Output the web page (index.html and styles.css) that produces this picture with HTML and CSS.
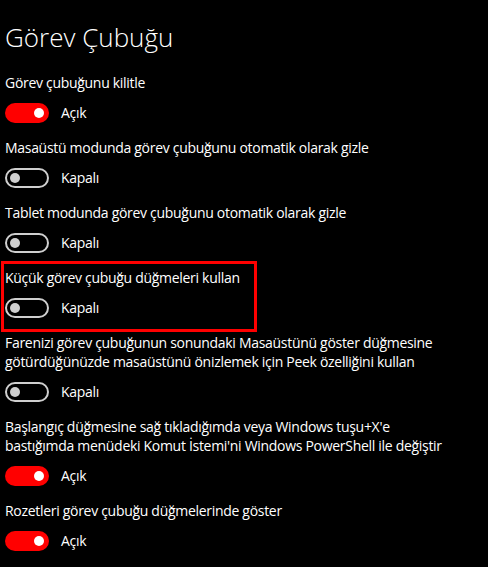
FILE: index.html
```html
<!DOCTYPE html>
<html lang="tr">
<head>
<meta charset="utf-8">
<title>Görev Çubuğu</title>
<link rel="stylesheet" href="styles.css">
</head>
<body>
<main class="page">
  <h1 class="title">Görev Çubuğu</h1>
  <div class="settings">
    <section class="group">
      <p class="label">Görev çubuğunu kilitle</p>
      <div class="toggle-row"><span class="toggle on"><span class="knob"></span></span><span class="state">Açık</span></div>
    </section>
    <section class="group">
      <p class="label">Masaüstü modunda görev çubuğunu otomatik olarak gizle</p>
      <div class="toggle-row"><span class="toggle off"><span class="knob"></span></span><span class="state">Kapalı</span></div>
    </section>
    <section class="group">
      <p class="label">Tablet modunda görev çubuğunu otomatik olarak gizle</p>
      <div class="toggle-row"><span class="toggle off"><span class="knob"></span></span><span class="state">Kapalı</span></div>
    </section>
    <section class="group marked">
      <p class="label">Küçük görev çubuğu düğmeleri kullan</p>
      <div class="toggle-row"><span class="toggle off"><span class="knob"></span></span><span class="state">Kapalı</span></div>
    </section>
    <section class="group">
      <p class="label">Farenizi görev çubuğunun sonundaki Masaüstünü göster düğmesine<br>götürdüğünüzde masaüstünü önizlemek için Peek özelliğini kullan</p>
      <div class="toggle-row"><span class="toggle off"><span class="knob"></span></span><span class="state">Kapalı</span></div>
    </section>
    <section class="group">
      <p class="label">Başlangıç düğmesine sağ tıkladığımda veya Windows tuşu+X'e<br>bastığımda menüdeki Komut İstemi'ni Windows PowerShell ile değiştir</p>
      <div class="toggle-row"><span class="toggle on"><span class="knob"></span></span><span class="state">Açık</span></div>
    </section>
    <section class="group">
      <p class="label">Rozetleri görev çubuğu düğmelerinde göster</p>
      <div class="toggle-row"><span class="toggle on"><span class="knob"></span></span><span class="state">Açık</span></div>
    </section>
  </div>
</main>
</body>
</html>
```
FILE: styles.css
```css
* { box-sizing: border-box; }
html, body {
  margin: 0;
  background: #000;
  color: #fff;
  font-family: "Open Sans", "Noto Sans", sans-serif;
}
.page {
  padding: 19px 0 0 5px;
}
.title {
  margin: 0 0 18px;
  font-size: 26px;
  line-height: 36px;
  font-weight: 300;
  letter-spacing: 0;
}
.settings {
  display: flex;
  flex-direction: column;
  gap: 15px;
}
.group {
  display: flex;
  flex-direction: column;
}
.label {
  margin: 0 0 11px;
  font-size: 14px;
  line-height: 19px;
  letter-spacing: -0.3px;
  white-space: nowrap;
}
.toggle-row {
  display: flex;
  align-items: center;
  gap: 12px;
  height: 20px;
}
.state {
  font-size: 14px;
  line-height: 20px;
  letter-spacing: -0.3px;
}
.toggle {
  display: flex;
  align-items: center;
  width: 44px;
  height: 20px;
  border-radius: 10px;
  padding: 0 3px;
}
.toggle.on {
  background: #ff0000;
  justify-content: flex-end;
  padding: 0 5px;
}
.toggle.off {
  border: 2px solid #cfcfcf;
}
.knob {
  width: 10px;
  height: 10px;
  border-radius: 50%;
}
.toggle.on .knob { background: #fff; }
.toggle.off .knob { background: #cfcfcf; }
.group.marked {
  position: relative;
}
.group.marked::after {
  content: "";
  position: absolute;
  left: -4px;
  top: -7px;
  width: 250px;
  bottom: -14px;
  border: 3px solid #ff0000;
  pointer-events: none;
}
```
